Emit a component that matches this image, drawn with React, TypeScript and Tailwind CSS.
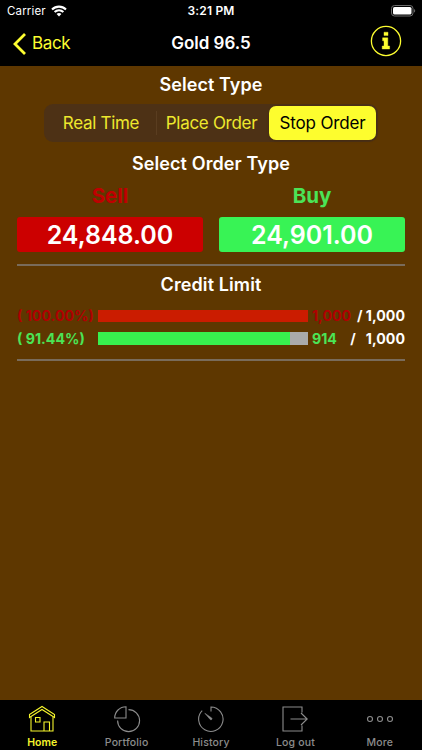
import type { ReactNode } from 'react';
import clsx from 'clsx';

const segments = [
  { label: 'Real Time', className: 'w-[111px]' },
  { label: 'Place Order', className: 'w-[112px]' },
  { label: 'Stop Order', className: 'w-[107px]' },
];

function StatusBar() {
  return (
    <div className="relative flex h-[22px] items-center justify-between pr-[6px] pl-[7px] text-white">
      <div className="flex items-center gap-[5px]">
        <span className="pt-px text-[11.5px] tracking-[0.15px]">Carrier</span>
        <svg width="16" height="12" viewBox="0 0 16 12" fill="none" stroke="currentColor" strokeWidth="2.1">
          <path d="M1 4.5C5 .6 11 .6 15 4.5" />
          <path d="M3.6 7.1c2.5-2.3 6.3-2.3 8.8 0" />
          <path d="M8 11.4 5.6 8.9c1.3-1.2 3.5-1.2 4.8 0z" fill="currentColor" stroke="none" />
        </svg>
      </div>
      <span className="absolute inset-x-0 text-center text-[12px] font-semibold tracking-[0.2px]">3:21 PM</span>
      <svg width="25" height="12" viewBox="0 0 25 12">
        <rect x=".5" y=".5" width="21.5" height="10.5" rx="3" fill="none" stroke="#6b6b6b" />
        <rect x="2" y="2" width="18.5" height="7.5" rx="1.6" fill="#fff" />
        <path d="M23.2 4v3.6c1.3-.5 1.3-3.1 0-3.6z" fill="#7b7b7b" />
      </svg>
    </div>
  );
}

function NavBar() {
  return (
    <div className="relative flex h-[43.5px] items-center justify-between pr-[20px] pl-[13px] text-[#fdfd30]">
      <button className="flex items-center gap-[6px]">
        <svg width="13" height="22" viewBox="0 0 13 22" fill="none" stroke="currentColor" strokeWidth="2.8">
          <path d="M12 1 2 11l10 10" />
        </svg>
        <span className="text-[17px] tracking-[-0.35px]">Back</span>
      </button>
      <h1 className="pointer-events-none absolute inset-x-0 text-center text-[17px] font-semibold text-white">
        Gold 96.5
      </h1>
      <button aria-label="Info" className="-mt-[5px]">
        <svg width="32" height="32" viewBox="0 0 32 32">
          <circle cx="16" cy="16" r="14.6" fill="none" stroke="currentColor" strokeWidth="1.3" />
          <path
            d="M14 7.2h4v3.4h-4zM12.6 12.8h5.2v8.2h1.8v3h-7.4v-3H14v-5.2h-1.4z"
            fill="currentColor"
            stroke="currentColor"
            strokeWidth=".4"
          />
        </svg>
      </button>
    </div>
  );
}

function SegmentedControl() {
  return (
    <div className="mx-auto flex h-[38px] w-[334px] items-center rounded-[9px] bg-[#4d3115] p-[2px]">
      {segments.map(({ label, className }, i) => {
        const selected = i === 2;
        return (
          <button
            key={label}
            className={clsx(
              className,
              'shrink-0 text-[17px] whitespace-nowrap',
              selected
                ? 'h-[34px] rounded-[7px] bg-[#fdfd2e] pt-px tracking-[-0.15px] text-black shadow-sm'
                : 'h-6 tracking-[-0.3px] text-[#eee82d]',
              i === 0 && 'border-r border-[#5a3d20]',
              i === 1 && 'pr-[3px]',
            )}
          >
            {label}
          </button>
        );
      })}
    </div>
  );
}

function PriceColumn({ title, price, sell }: { title: string; price: string; sell?: boolean }) {
  return (
    <div className="flex w-[186px] flex-col items-center">
      <div
        className={clsx(
          'flex h-[40px] items-center pb-[2px] text-[20.5px] font-bold',
          sell ? 'text-[#c00000]' : 'text-[#4be456]',
        )}
      >
        {title}
      </div>
      <button
        className={clsx(
          'h-[35px] w-full rounded-[3px] text-[25px] font-semibold text-white',
          sell ? 'bg-[#cc0000]' : 'bg-[#38f355]',
        )}
      >
        {price}
      </button>
    </div>
  );
}

interface CreditRowProps {
  percent: number;
  used: string;
  sell?: boolean;
}

function CreditRow({ percent, used, sell }: CreditRowProps) {
  const color = sell ? 'text-[#b00000]' : 'text-[#4be456]';
  return (
    <div className="flex h-[22.5px] items-center text-[14.2px] font-bold whitespace-nowrap">
      <span className={clsx('w-[81px] shrink-0', color)}>( {percent.toFixed(2)}%)</span>
      <div className="h-[12.5px] w-[210px] shrink-0 bg-[#aaaaaa]">
        <div
          className={clsx('h-full', sell ? 'bg-[#cb1c00]' : 'bg-[#38f04e]')}
          style={{ width: `${percent}%` }}
        />
      </div>
      <div className="flex flex-1 justify-between pl-[4px] text-white">
        <span className={color}>{used}</span>
        <span className="whitespace-pre">{sell ? '/ 1,000' : '/   1,000'}</span>
      </div>
    </div>
  );
}

function Tab({ label, active, children }: { label: string; active?: boolean; children: ReactNode }) {
  return (
    <button
      className={clsx(
        'flex flex-1 flex-col items-center pt-[5px]',
        active ? 'text-[#f5f52c]' : 'text-[#8c8c8c]',
      )}
    >
      <svg width="28" height="28" viewBox="0 0 28 28" fill="none" stroke="currentColor" strokeWidth="1.1">
        {children}
      </svg>
      <span
        className={clsx(
          'mt-[3px] text-[10.5px] leading-[14px]',
          active ? 'font-semibold' : 'font-medium tracking-[0.15px]',
        )}
      >
        {label}
      </span>
    </button>
  );
}

function TabBar() {
  return (
    <nav className="flex h-[50px] bg-black">
      <Tab label="Home" active>
        <path d="M1.5 9.5 14 1.5l12.5 8v3L14 4.5l-12.5 8z" />
        <path d="M3 12v14h22V12M16 26v-9h5.5v9M7.5 12.5H12V17H7.5z" />
      </Tab>
      <Tab label="Portfolio">
        <path d="M13 13H1.7A11.3 11.3 0 0 1 13 1.7z" />
        <path d="M15.5 4.6A11 11 0 1 1 4.6 15.5" />
      </Tab>
      <Tab label="History">
        <path d="M14 6.5V2A12.2 12.2 0 1 1 5.2 5.6" />
        <path d="m7.8 8.2 6.9 4.8c1 .9-.4 2.5-1.5 1.5z" fill="currentColor" strokeWidth=".5" />
      </Tab>
      <Tab label="Log out">
        <path d="M21 7.5V2H2v24h19v-5.5M9.5 14H26M20 8l6.2 6-6.2 6" />
      </Tab>
      <Tab label="More">
        <circle cx="4" cy="14" r="2.5" />
        <circle cx="14" cy="14" r="2.5" />
        <circle cx="24" cy="14" r="2.5" />
      </Tab>
    </nav>
  );
}

export default function App() {
  return (
    <div className="flex h-[750px] w-[422px] flex-col overflow-hidden bg-[#5e3700] font-['Inter',sans-serif]">
      <header className="bg-black">
        <StatusBar />
        <NavBar />
      </header>
      <main className="flex-1 px-[17px]">
        <h2 className="flex h-[38.5px] items-center justify-center pb-px text-[18px] font-semibold tracking-[0.05px] text-white">
          Select Type
        </h2>
        <SegmentedControl />
        <h2 className="flex h-[35px] items-end justify-center text-[18px] font-semibold tracking-[0.1px] text-white">
          Select Order Type
        </h2>
        <div className="flex justify-between">
          <PriceColumn title="Sell" price="24,848.00" sell />
          <PriceColumn title="Buy" price="24,901.00" />
        </div>
        <hr className="mt-3 border-t-2 border-[#796b5a]" />
        <h2 className="flex h-[38.5px] items-center justify-center pb-px text-[18px] font-semibold tracking-[0.1px] text-white">
          Credit Limit
        </h2>
        <CreditRow percent={100} used="1,000" sell />
        <CreditRow percent={91.44} used="914" />
        <hr className="mt-[9.5px] border-t-2 border-[#796b5a]" />
      </main>
      <TabBar />
    </div>
  );
}
